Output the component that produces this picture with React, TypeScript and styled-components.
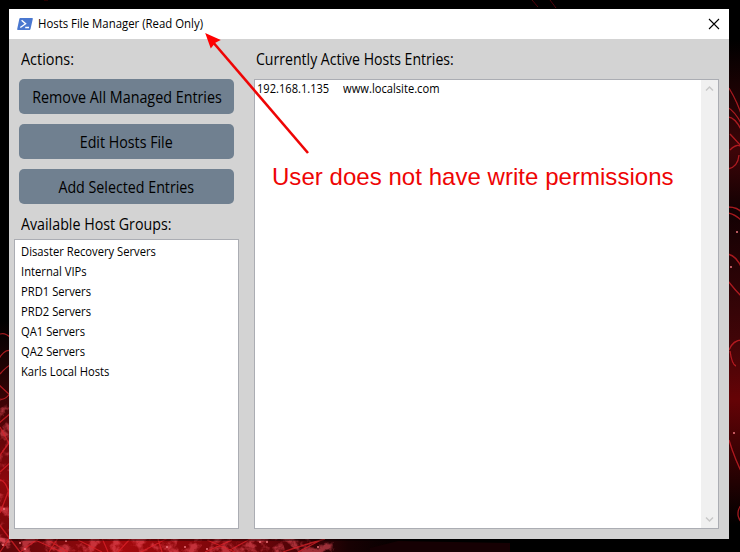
import React from "react";
import styled, { createGlobalStyle } from "styled-components";

const GlobalStyle = createGlobalStyle`
  *, *::before, *::after { box-sizing: border-box; }
  html, body { margin: 0; padding: 0; background: #000; overflow: hidden; }
  body { font-family: "Open Sans", "Noto Sans", sans-serif; color: #000; }
`;

const Desktop = styled.div`
  position: relative;
  width: 740px;
  height: 552px;
  padding: 9px 11px 13px 9px;
  background: #000;
  overflow: hidden;
`;

const Wallpaper = styled.svg`
  position: absolute;
  inset: 0;
`;

const Window = styled.main`
  position: relative;
  display: flex;
  flex-direction: column;
  width: 720px;
  height: 530px;
  background: #d3d3d3;
`;

const TitleBar = styled.header`
  display: flex;
  align-items: center;
  height: 30px;
  padding: 0 9px 0 8px;
  background: #fff;
`;

const Label = styled.span<{ $size: number; $scale: number; $origin?: string }>`
  display: block;
  white-space: pre;
  font-size: ${(p) => p.$size}px;
  transform: scaleX(${(p) => p.$scale});
  transform-origin: ${(p) => p.$origin ?? "left"};
`;

const Title = styled.div`
  flex: 1;
  margin-left: 5px;
  line-height: 30px;
`;

const CloseButton = styled.button`
  display: flex;
  padding: 0;
  border: 0;
  background: none;
`;

const Content = styled.div`
  display: flex;
  flex: 1;
  gap: 15px;
  padding: 0 10px 10px 5px;
`;

const Column = styled.section<{ $width: number }>`
  display: flex;
  flex-direction: column;
  width: ${(p) => p.$width}px;
`;

const Heading = styled.div<{ $height: number; $indent: number }>`
  height: ${(p) => p.$height}px;
  line-height: 41px;
  padding-left: ${(p) => p.$indent}px;
`;

const Actions = styled.div`
  display: flex;
  flex-direction: column;
  gap: 10px;
  padding: 0 5px;
`;

const ActionButton = styled.button`
  display: flex;
  justify-content: center;
  height: 35px;
  padding: 0;
  border: 0;
  border-radius: 5px;
  background: #708090;
  color: #000;
  font-family: inherit;
  line-height: 37px;
`;

const Panel = styled.div`
  display: flex;
  flex: 1;
  border: 1px solid #abadb3;
  background: #fff;
`;

const GroupList = styled.ul`
  margin: 0;
  padding: 2px 6px;
  list-style: none;
`;

const GroupItem = styled.li`
  height: 20px;
  line-height: 20px;
`;

const EntryRow = styled.div`
  display: flex;
  flex: 1;
  padding-left: 2px;
  line-height: 18px;
`;

const Address = styled.div`
  width: 86px;
`;

const ScrollBar = styled.div`
  display: flex;
  flex-direction: column;
  justify-content: space-between;
  align-items: center;
  width: 17px;
  padding: 5px 0;
  background: #f0f0f0;
`;

const Arrow = styled.svg`
  position: absolute;
  left: 0;
  top: 0;
`;

const Note = styled.div`
  position: absolute;
  left: 272px;
  top: 163px;
  font: 24px/28px "Liberation Sans", Arial, sans-serif;
  letter-spacing: 0.04px;
  color: #ee0505;
  white-space: nowrap;
`;

const actions: [string, number][] = [
  ["Remove All Managed Entries", 0.895],
  ["Edit Hosts File", 0.89],
  ["Add Selected Entries", 0.89],
];

const groups = [
  "Disaster Recovery Servers",
  "Internal VIPs",
  "PRD1 Servers",
  "PRD2 Servers",
  "QA1 Servers",
  "QA2 Servers",
  "Karls Local Hosts",
];

const filaments = [
  "M-2 335Q4 331 11 338 M-2 360Q5 348 12 351 M0 374Q7 366 12 364 M-2 384L11 396 M0 399Q5 401 12 391 M-2 424L12 412 M0 427L11 447 M-2 458L11 440 M0 472L11 462 M-1 480Q8 480 10 502 M0 513L10 487",
  "M-2 523L20 552 M0 552L13 533 M20 552L42 536 M35 540L62 552 M45 538L68 552 M49 552L58 538 M78 540L102 552 M102 538L108 552 M118 552L130 539 M141 552L168 538 M162 552L158 539 M205 552L232 540 M207 540L235 552 M230 550L252 538 M283 552Q300 546 325 539 M298 552L319 541",
  "M729 88Q738 103 742 117 M727 107Q735 111 742 125 M728 117Q735 117 742 131 M730 134L742 147 M730 150Q738 142 742 148 M728 169Q738 167 739 155 M728 207Q738 207 742 213 M728 213Q735 214 742 221 M728 254Q737 256 742 269 M728 281Q735 290 742 297 M729 350Q733 340 742 340 M730 351Q732 365 736 366 M729 440Q735 460 744 477 M741 505Q734 515 743 524",
];

const sparks = [
  [4, 509], [3, 545], [20, 543], [25, 549], [66, 541], [167, 547], [185, 547],
  [207, 549], [260, 542], [267, 542], [318, 547], [737, 232], [731, 267], [734, 433],
];

export default function App() {
  return (
    <>
      <GlobalStyle />
      <Desktop>
        <Wallpaper width="740" height="552" viewBox="0 0 740 552" aria-hidden="true">
          <defs>
            <linearGradient id="left" x1="0" y1="320" x2="0" y2="552" gradientUnits="userSpaceOnUse">
              <stop offset="0" stopColor="#000" />
              <stop offset=".25" stopColor="#250304" />
              <stop offset=".7" stopColor="#8e080c" />
              <stop offset="1" stopColor="#710609" />
            </linearGradient>
            <linearGradient id="bottom">
              <stop offset="0" stopColor="#5b0609" />
              <stop offset=".3" stopColor="#a3090d" />
              <stop offset=".64" stopColor="#690509" />
              <stop offset=".84" stopColor="#180103" />
              <stop offset="1" stopColor="#000" />
            </linearGradient>
            <linearGradient id="right" x1="0" y1="40" x2="0" y2="525" gradientUnits="userSpaceOnUse">
              <stop offset="0" stopColor="#000" />
              <stop offset=".23" stopColor="#3d0508" />
              <stop offset=".35" stopColor="#120103" />
              <stop offset=".62" stopColor="#410508" />
              <stop offset=".74" stopColor="#650306" />
              <stop offset="1" stopColor="#000" />
            </linearGradient>
            <filter id="soft"><feGaussianBlur stdDeviation=".7" /></filter>
            <filter id="texture" x="0" y="0" width="1" height="1">
              <feTurbulence type="fractalNoise" baseFrequency=".09" numOctaves="4" seed="7" />
              <feColorMatrix values="0 0 0 0 .92  0 0 0 0 .09  0 0 0 0 .12  5 0 0 0 -2.4" />
            </filter>
          </defs>
          <rect width="740" height="552" fill="#000" />
          <rect y="320" width="10" height="232" fill="url(#left)" />
          <rect y="538" width="415" height="14" fill="url(#bottom)" />
          <rect x="729" y="40" width="11" height="485" fill="url(#right)" />
          <path d="M370 552V548L398 541 510 543V552Z" fill="#160003" />
          <rect y="400" width="10" height="152" filter="url(#texture)" opacity=".55" />
          <rect y="538" width="340" height="14" filter="url(#texture)" opacity=".55" />
          <g fill="none" filter="url(#soft)">
            {filaments.map((d) => (
              <path key={d} d={d} stroke="#e0242b" strokeWidth="1.3" opacity=".7" />
            ))}
            <path d="M44 0L48 0M532 0L538 7 M550 0L556 8" stroke="#50080c" />
          </g>
          {sparks.map(([x, y]) => (
            <circle key={`${x}-${y}`} cx={x} cy={y} r="1" fill="#ed747b" />
          ))}
          <rect x="9" y="539" width="721" height="2" fill="#000" opacity=".35" />
        </Wallpaper>

        <Window>
          <TitleBar>
            <svg width="16" height="12" viewBox="0 0 16 12" aria-hidden="true">
              <path d="M3.2 0H15.2Q16 0 15.8 .9L13.5 11Q13.3 12 12.4 12H.8Q0 12 .2 11L2.3 .9Q2.5 0 3.2 0Z" fill="#4a78d0" />
              <path d="M4.6 2.2L8.6 5.8L3.3 9.5M8.2 9.5H12" fill="none" stroke="#fff" strokeWidth="1.4" />
            </svg>
            <Title>
              <Label $size={12} $scale={0.949}>Hosts File Manager (Read Only)</Label>
            </Title>
            <CloseButton aria-label="Close">
              <svg width="12" height="12" viewBox="0 0 12 12">
                <path d="M1 1L11 11M11 1L1 11" stroke="#000" strokeWidth="1.1" />
              </svg>
            </CloseButton>
          </TitleBar>

          <Content>
            <Column $width={225}>
              <Heading $height={40} $indent={7}>
                <Label $size={16} $scale={0.9}>Actions:</Label>
              </Heading>
              <Actions>
                {actions.map(([name, scale]) => (
                  <ActionButton key={name}>
                    <Label $size={16} $scale={scale} $origin="center">{name}</Label>
                  </ActionButton>
                ))}
              </Actions>
              <Heading $height={35} $indent={7}>
                <Label $size={16} $scale={0.89}>Available Host Groups:</Label>
              </Heading>
              <Panel>
                <GroupList>
                  {groups.map((group) => (
                    <GroupItem key={group}>
                      <Label $size={12} $scale={0.935}>{group}</Label>
                    </GroupItem>
                  ))}
                </GroupList>
              </Panel>
            </Column>

            <Column $width={465}>
              <Heading $height={40} $indent={2}>
                <Label $size={16} $scale={0.88}>Currently Active Hosts Entries:</Label>
              </Heading>
              <Panel>
                <EntryRow>
                  <Address>
                    <Label $size={12} $scale={0.925}>192.168.1.135</Label>
                  </Address>
                  <Label $size={12} $scale={0.93}>www.localsite.com</Label>
                </EntryRow>
                <ScrollBar>
                  <svg width="9" height="7" viewBox="0 0 9 7">
                    <path d="M1 5.5L4.5 2L8 5.5" fill="none" stroke="#c8c8c8" strokeWidth="1.5" />
                  </svg>
                  <svg width="9" height="7" viewBox="0 0 9 7">
                    <path d="M1 1.5L4.5 5L8 1.5" fill="none" stroke="#c8c8c8" strokeWidth="1.5" />
                  </svg>
                </ScrollBar>
              </Panel>
            </Column>
          </Content>
        </Window>

        <Arrow width="320" height="165" viewBox="0 0 320 165" aria-hidden="true">
          <path d="M308 153L212 41" stroke="#ee0505" strokeWidth="2.6" />
          <path d="M206.5 34.5L219 40L215 42L211 47Z" fill="#f00" stroke="#f00" strokeWidth="1.5" />
        </Arrow>
        <Note>User does not have write permissions</Note>
      </Desktop>
    </>
  );
}
